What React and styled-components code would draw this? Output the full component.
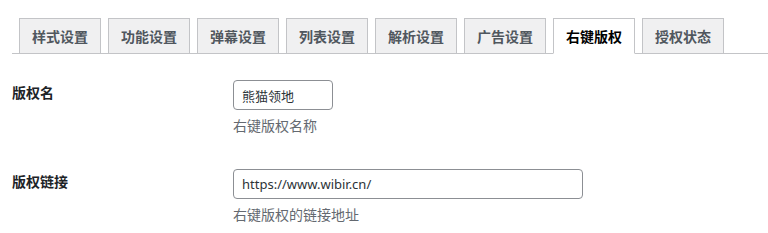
import React from 'react';
import styled, { createGlobalStyle } from 'styled-components';

const GlobalStyle = createGlobalStyle`
  body {
    margin: 0;
    background: #fff;
    font-family: "Noto Sans", "Noto Sans CJK SC", sans-serif;
    font-size: 14px;
    color: #1d2327;
  }
`

const Wrap = styled.div`
  padding: 18px 0 0 12px;
  width: 756px;
`

const NavTabs = styled.div`
  display: flex;
  gap: 7px;
  padding-left: 7px;
  border-bottom: 1px solid #c3c4c7;
`

const Tab = styled.div`
  box-sizing: border-box;
  height: 36px;
  margin-bottom: -1px;
  padding: 5px 12px;
  border: 1px solid #c3c4c7;
  border-bottom-color: ${p => (p.$active ? '#fff' : '#c3c4c7')};
  background: ${p => (p.$active ? '#fff' : '#f0f0f1')};
  color: ${p => (p.$active ? '#000' : '#50575e')};
  font-family: "Noto Sans CJK SC", sans-serif;
  font-size: 14px;
  font-weight: 700;
  line-height: 24px;
  white-space: nowrap;
`

const Form = styled.div`
  padding-top: 11px;
`

const Row = styled.div`
  display: flex;
  padding: 15px 0 19px;
`

const Label = styled.div`
  width: 221px;
  flex-shrink: 0;
  padding-top: 3px;
  font-family: "Noto Sans CJK SC", sans-serif;
  font-weight: 700;
  font-size: 14px;
  line-height: 18px;
  color: #1d2327;
`

const Field = styled.div`
  display: flex;
  flex-direction: column;
`

const Input = styled.input`
  box-sizing: border-box;
  width: ${p => p.$width}px;
  height: 30px;
  margin: 0;
  padding: 0 8px;
  border: 1px solid #8c8f94;
  border-radius: 4px;
  background: #fff;
  color: #2c3338;
  font-family: "Noto Sans", "Noto Sans CJK SC", sans-serif;
  font-size: 13px;
  outline: none;
`

const Desc = styled.p`
  margin: 5px 0 0;
  font-family: "Noto Sans CJK SC", sans-serif;
  font-size: 14px;
  line-height: 20px;
  color: #646970;
`

const tabs = ['样式设置', '功能设置', '弹幕设置', '列表设置', '解析设置', '广告设置', '右键版权', '授权状态']

const fields = [
  { label: '版权名', value: '熊猫领地', width: 100, desc: '右键版权名称' },
  { label: '版权链接', value: 'https://www.wibir.cn/', width: 350, desc: '右键版权的链接地址' },
]

export default function App() {
  return (
    <Wrap>
      <GlobalStyle />
      <NavTabs>
        {tabs.map(t => (
          <Tab key={t} $active={t === '右键版权'}>{t}</Tab>
        ))}
      </NavTabs>
      <Form>
        {fields.map(f => (
          <Row key={f.label}>
            <Label>{f.label}</Label>
            <Field>
              <Input $width={f.width} defaultValue={f.value} />
              <Desc>{f.desc}</Desc>
            </Field>
          </Row>
        ))}
      </Form>
    </Wrap>
  )
}
